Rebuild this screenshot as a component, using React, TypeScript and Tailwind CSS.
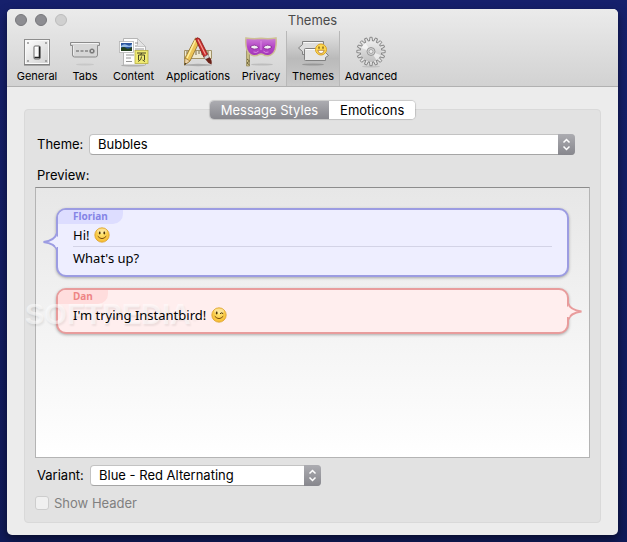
import { useState, type ReactNode } from 'react'

function GeneralIcon() {
  return (
    <svg width="32" height="32" viewBox="0 0 32 32" fill="none">
      <rect x="3.5" y="3.5" width="25" height="25" fill="url(#plate)" stroke="#8d8d8d" />
      <rect x="4.5" y="4.5" width="23" height="23" stroke="#fafafa" />
      <path d="M3 29h26" stroke="#747474" />
      {[7, 25].map((x) => [7, 25].map((y) => <circle key={`${x}${y}`} cx={x} cy={y} r="0.9" fill="#8a8a8a" />))}
      <rect x="13" y="10" width="6" height="13" rx="1" fill="#fff" stroke="#6b6b6b" />
      <path d="M14 12h3v6h-3z" fill="#f8f8f8" />
      <path d="M13.5 21.5h5v-11" stroke="#262626" strokeWidth="1.6" />
      <defs>
        <linearGradient id="plate" x1="0" y1="0" x2="1" y2="1">
          <stop stopColor="#fff" />
          <stop offset="1" stopColor="#cfcfcf" />
        </linearGradient>
      </defs>
    </svg>
  )
}

function TabsIcon() {
  return (
    <svg width="32" height="32" viewBox="0 0 32 32" fill="none">
      <ellipse cx="16" cy="28.5" rx="9" ry="1" fill="#000" opacity="0.08" />
      <path d="M1.5 6.5h29v3h-2v9.5q0 2-2 2h-21q-2 0-2-2V9.5h-2z" fill="#d6d6d6" stroke="#8b8b8b" />
      <path d="M2.5 7.5h27" stroke="#f3f3f3" />
      <path d="M4.5 10v9" stroke="#ececec" />
      <path d="M7 15h3M11.5 15h3M16 15h3" stroke="#999" strokeWidth="2" />
      <circle cx="23" cy="15" r="2.6" fill="#777" />
      <path d="M21.8 13.8l2.4 2.4m0-2.4l-2.4 2.4" stroke="#e0e0e0" strokeWidth="0.8" />
    </svg>
  )
}

function ContentIcon() {
  return (
    <svg width="32" height="32" viewBox="0 0 32 32" fill="none">
      <ellipse cx="15" cy="29.5" rx="12" ry="1" fill="#000" opacity="0.2" />
      <path d="M5.5 2.5h14l8 8v18.5h-22z" fill="#fdfdfd" stroke="#b5b5b5" />
      <path d="M19.5 2.5v8h8z" fill="#e3e3e3" stroke="#b8b8b8" strokeWidth="0.7" />
      <path d="M8 19h8M8 22h5M8 25.5h6M17 7h3M17 10h2M17 13h9" stroke="#888" strokeWidth="0.9" />
      <rect x="1.5" y="5.5" width="14" height="11" fill="#fff" stroke="#b4b4b4" strokeWidth="0.8" />
      <path d="M3 7h11v8H3z" fill="#2c559e" />
      <path d="M3 10q3-3 6-1t5-1v3H3z" fill="#96bbe6" />
      <path d="M3 12q3-2 5 0t6-1v4H3z" fill="#24411f" />
      <rect x="17" y="14.5" width="13" height="13" fill="#efea72" stroke="#b7ae41" strokeWidth="0.8" />
      <path d="M19 17h9M23.5 17l-.7 2M20.5 24v-5h6v5M23.5 20.5q.3 3.5-3.5 5M24.5 24l2.5 1.5" stroke="#38371c" strokeWidth="0.9" />
    </svg>
  )
}

function ApplicationsIcon() {
  return (
    <svg width="32" height="32" viewBox="0 0 32 32" fill="none">
      <ellipse cx="16" cy="29" rx="14" ry="1.2" fill="#000" opacity="0.2" />
      <path d="M2.5 14.5h27v8h-27z" fill="#eee8d0" stroke="#a3946a" />
      <path d="M5 15v3M8 15v4M11 15v3M14 15v4M17 15v3M20 15v4M23 15v3M26 15v4" stroke="#6e5f38" strokeWidth="0.9" />
      <path d="M13.5 2l4.5 2.5L8 25l-5.5 4L3 22z" fill="#ecc456" stroke="#8b6a25" strokeWidth="0.8" />
      <path d="M13.5 4L5 22" stroke="#fff0a0" strokeWidth="1.5" />
      <path d="M3 22l5 3-5.5 4z" fill="#edd2a7" stroke="#8b6a25" strokeWidth="0.6" />
      <path d="M2.5 29l.3-2.3 1.6 1z" fill="#222" />
      <path d="M13.5 3q1.5-2.5 4.5 0l8 16-4 2.5z" fill="#c92c2a" stroke="#841d1c" strokeWidth="0.8" />
      <path d="M16 3.5l7.5 15" stroke="#f59c93" strokeWidth="1.3" />
      <path d="M22 21l4-2.5 1.5 3-4 2z" fill="#d6d6d6" stroke="#777" strokeWidth="0.6" />
      <path d="M23.5 23.5l4-2.2q3 2.7 2 7.2-3.5-1-6-5z" fill="#6b2219" />
    </svg>
  )
}

function PrivacyIcon() {
  return (
    <svg width="32" height="32" viewBox="0 0 32 32" fill="none">
      <ellipse cx="17" cy="28.5" rx="11" ry="1" fill="#000" opacity="0.13" />
      <path d="M1.5 6h3v24h-3z" fill="#c9bd83" stroke="#8c8154" strokeWidth="0.7" />
      <path d="M2 23l2.5 2-2.5 2 2.5 2" stroke="#665b33" strokeWidth="0.9" />
      <path d="M1 2q7 1.300 15 .3 8 1 15-.3.8 6-.8 11.500-2 5.500-7 6.300-3.500.2-5.200-1.300-2-.8-4 0-1.700 1.500-5.200 1.300-5-.8-7-6.300Q.2 8 1 2z" fill="url(#mask)" stroke="#cdbf94" strokeWidth="1.5" />
      <path d="M5 11q4.500-4 9 .5-5 3.500-9-.5zM18 11.500q4.500-4.500 9-.5-4 4-9 .5z" fill="#f2ecf3" stroke="#7d2389" strokeWidth="0.8" />
      <path d="M16 5v9M8.500 16q3 1.300 5-.8M18.500 15.200q2 2.100 5 .8" stroke="#e08fe9" strokeWidth="0.9" />
      <defs>
        <linearGradient id="mask" x1="0" y1="0" x2="0" y2="1">
          <stop stopColor="#cd7fd6" />
          <stop offset="0.5" stopColor="#b545c8" />
          <stop offset="1" stopColor="#a237b7" />
        </linearGradient>
      </defs>
    </svg>
  )
}

function ThemesIcon() {
  return (
    <svg width="32" height="32" viewBox="0 0 32 32" fill="none">
      <ellipse cx="16" cy="28.5" rx="11" ry="1" fill="#000" opacity="0.2" />
      <path d="M5.5 5.5h21v13h-21v-3L1.5 12l4-3.5z" fill="#ddd" stroke="#808080" />
      <path d="M6.5 6.5h19" stroke="#f8f8f8" />
      <path d="M8.5 12.5h20v4l3 3-3 2v3h-20q-1 0-1-1V13.5q0-1 1-1z" fill="#e6e6e6" stroke="#808080" />
      <path d="M8.5 13.5h17" stroke="#fff" />
      <circle cx="24" cy="13.5" r="5.5" fill="#fdd94f" stroke="#d9a229" />
      <path d="M22 10.5v2.2M26 10.5v2.2" stroke="#5b3b0c" strokeWidth="1.1" />
      <path d="M20.8 14.3h6.4q-.5 3.2-3.2 3.2t-3.2-3.2z" fill="#fff" stroke="#a8691a" strokeWidth="0.7" />
    </svg>
  )
}

function AdvancedIcon() {
  const teeth = Array.from({ length: 16 }, (_, i) => i * 22.5)
  return (
    <svg width="32" height="32" viewBox="0 0 32 32" fill="none">
      <ellipse cx="16" cy="30.5" rx="9" ry="1" fill="#000" opacity="0.1" />
      <circle cx="16" cy="15.5" r="10.8" fill="#d0d0d0" stroke="#777" strokeWidth="0.8" />
      {teeth.map((angle) => (
        <path key={angle} d="M14.4 5.5l.5-4.2h2.2l.5 4.2" transform={`rotate(${angle} 16 15.5)`} fill="#e2e2e2" stroke="#777" strokeWidth="0.8" />
      ))}
      <circle cx="16" cy="15.5" r="10.4" fill="url(#gear)" />
      <path d="M16 15.5L6.5 12a10 10 0 0 1 4-5zM16 15.5l9.5 3.5a10 10 0 0 1-4 5z" fill="#fff" opacity="0.6" />
      <circle cx="16" cy="15.5" r="4" fill="#d2d2d2" stroke="#929292" strokeWidth="0.9" />
      <circle cx="16" cy="15.5" r="2" fill="#ececec" stroke="#999" strokeWidth="0.8" />
      <defs>
        <linearGradient id="gear" x1="0" y1="0" x2="0" y2="1">
          <stop stopColor="#ececec" />
          <stop offset="1" stopColor="#c0c0c0" />
        </linearGradient>
      </defs>
    </svg>
  )
}

function Smiley({ wink = false }: { wink?: boolean }) {
  return (
    <svg width="16" height="16" viewBox="0 0 16 16" fill="none">
      <circle cx="8" cy="8" r="7.2" fill="url(#face)" stroke="#dca12b" strokeWidth="0.8" />
      <ellipse cx="8" cy="4" rx="5" ry="2.5" fill="#fff" opacity="0.35" />
      <ellipse cx="5.7" cy="6" rx="0.9" ry="1.4" fill="#4a3208" />
      {wink ? (
        <path d="M9 6.7q1.7-1.8 3.2 0" stroke="#4a3208" />
      ) : (
        <ellipse cx="10.3" cy="6" rx="0.9" ry="1.4" fill="#4a3208" />
      )}
      <path d="M4 9.5q4 4.5 8 0" stroke="#7a4c0b" strokeLinecap="round" />
      <defs>
        <radialGradient id="face" cx="0.5" cy="0.4" r="0.6">
          <stop stopColor="#ffe877" />
          <stop offset="1" stopColor="#f6b92e" />
        </radialGradient>
      </defs>
    </svg>
  )
}

const tools = [
  { name: 'General', icon: <GeneralIcon />, width: 'w-[52px]' },
  { name: 'Tabs', icon: <TabsIcon />, width: 'w-[44px]' },
  { name: 'Content', icon: <ContentIcon />, width: 'w-[53px]' },
  { name: 'Applications', icon: <ApplicationsIcon />, width: 'w-[76px]' },
  { name: 'Privacy', icon: <PrivacyIcon />, width: 'w-[50px]' },
  { name: 'Themes', icon: <ThemesIcon />, width: 'w-[54px]' },
  { name: 'Advanced', icon: <AdvancedIcon />, width: 'w-[62px]' },
]

function Select({ id, options, className }: { id: string; options: string[]; className: string }) {
  return (
    <div className={`relative ${className}`}>
      <select id={id} className="block h-[21px] w-full appearance-none rounded-[4px] border border-[#c3c3c3] border-b-[#a5a5a5] bg-white pr-6 pl-2 text-[13px] leading-[19px] text-black">
        {options.map((option) => (
          <option key={option}>{option}</option>
        ))}
      </select>
      <span className="pointer-events-none absolute top-0 right-0 flex h-[21px] w-[17px] items-center justify-center rounded-r-[4px] bg-linear-to-b from-[#acacb1] to-[#87878d]">
        <svg width="9" height="13" viewBox="0 0 9 13" fill="none" stroke="#fff" strokeWidth="1.5">
          <path d="M1.5 4.5l3-3 3 3M1.5 8.5l3 3 3-3" />
        </svg>
      </span>
    </div>
  )
}

function Bubble({ name, red = false, children }: { name: string; red?: boolean; children: ReactNode }) {
  return (
    <div className={`relative rounded-[10px] border-2 pb-[6px] shadow-[0_1px_3px_rgba(0,0,0,0.3)] ${red ? 'border-[#e89c9c] bg-[#ffeeee]' : 'border-[#9c9ce2] bg-[#eeeeff]'}`}>
      <div className={`w-fit rounded-tl-[8px] rounded-br-[10px] px-[15px] pb-[2px] font-['Noto_Sans',sans-serif] text-[10px] leading-[12px] font-bold ${red ? 'bg-[#ffdddd] text-[#ee8585]' : 'bg-[#ddddff] text-[#8585e6]'}`}>
        {name}
      </div>
      {/* messages stay readable above the watermark */}
      <div className="relative z-10 mx-[15px] divide-y divide-[#d3d3e6] font-['Noto_Sans',sans-serif] text-[13px] leading-[22px] text-black">{children}</div>
      {red ? (
        <svg className="absolute top-[13px] -right-[16px]" width="18" height="18" viewBox="0 0 18 18">
          <path d="M3 0q2 7 13.5 8.5Q5 10 3 17" fill="#ffeeee" stroke="#e89c9c" strokeWidth="2" />
          <path d="M2 3v11h2.5V6z" fill="#ffeeee" />
        </svg>
      ) : (
        <svg className="absolute top-[23px] -left-[16px]" width="18" height="18" viewBox="0 0 18 18">
          <path d="M15 0q-2 7.500-13.500 9Q13 10.500 15 17" fill="#eeeeff" stroke="#9c9ce2" strokeWidth="2" />
          <path d="M16 3v11h-2.500V6z" fill="#eeeeff" />
        </svg>
      )}
    </div>
  )
}

export default function App() {
  const [tool, setTool] = useState('Themes')
  const [tab, setTab] = useState('Message Styles')

  return (
    <div className="flex min-h-screen bg-linear-to-b from-[#16206c] to-[#101a58] pt-[9px] pr-[9px] pb-[7px] pl-[7px] font-[Inter,sans-serif] text-[13px] text-black">
      <main className="flex flex-1 flex-col rounded-[5px] bg-[#ececec] shadow-[0_4px_10px_rgba(0,0,0,0.5)]">
        <header className="rounded-t-[5px] border-b border-[#b1b1b1] bg-linear-to-b from-[#ebebeb] to-[#d2d2d2]">
          <div className="grid h-[22px] grid-cols-[1fr_auto_1fr] items-center px-2">
            <div className="flex gap-2">
              <button aria-label="Close" className="size-3 rounded-full border border-[#77777b] bg-[#8d8d92]" />
              <button aria-label="Minimize" className="size-3 rounded-full border border-[#77777b] bg-[#8d8d92]" />
              <button aria-label="Zoom" disabled className="size-3 rounded-full border border-[#bcbcbc] bg-[#d0d0d0]" />
            </div>
            <h1 className="text-[13px] leading-[22px] text-[#4b4b4b]">Themes</h1>
          </div>
          <nav className="flex pl-1">
            {tools.map(({ name, icon, width }) => (
              <button
                key={name}
                onClick={() => setTool(name)}
                className={`flex h-[55px] shrink-0 flex-col items-center border-x pt-[5px] text-[11px] leading-[16px] ${width} ${tool === name ? 'border-[#b8b8b8] bg-linear-to-b from-[#e4e4e4] via-[#bababa] to-[#cbcbcb]' : 'border-transparent'}`}
              >
                {icon}
                {name}
              </button>
            ))}
          </nav>
        </header>

        <div className="flex flex-1 flex-col pt-[14px] pr-[17px] pb-[12px] pl-[17px]">
          <div className="z-10 -mb-[10px] flex h-[18px] self-center rounded-[4px] bg-white shadow-[0_0_1px_1px_rgba(0,0,0,0.15)]">
            {['Message Styles', 'Emoticons'].map((item) => (
              <button
                key={item}
                onClick={() => setTab(item)}
                className={`px-[11px] leading-[18px] first:rounded-l-[4px] last:rounded-r-[4px] ${tab === item ? 'bg-linear-to-b from-[#acacb1] to-[#87878d] text-white' : 'bg-white text-black'}`}
              >
                {item}
              </button>
            ))}
          </div>

          <section className="flex flex-1 flex-col rounded-[4px] border border-[#d9d9d9] bg-[#e2e2e2] px-[10px] pt-[24px] pb-[10px]">
            <div className="flex items-center pr-[15px] pl-[2px]">
              <label htmlFor="theme" className="w-[52px]">Theme:</label>
              <Select id="theme" options={['Bubbles']} className="flex-1" />
            </div>
            <h2 className="mt-[10px] mb-[2px] pl-[2px] leading-[20px]">Preview:</h2>
            <div className="flex min-h-[271px] flex-1 flex-col gap-[11px] border border-[#b4b4b4] border-t-[#8c8c8c] bg-linear-to-b from-[#e7e7e7] to-white px-[20px] pt-[20px]">
              <Bubble name="Florian">
                <p className="flex items-center gap-[5px]">Hi! <Smiley /></p>
                <p>What's up?</p>
              </Bubble>
              <div className="relative">
                <Bubble name="Dan" red>
                  <p className="flex items-center gap-[5px]">I'm trying Instantbird! <Smiley wink /></p>
                </Bubble>
                <span className="pointer-events-none absolute top-[8px] -left-[31px] font-['Liberation_Sans',sans-serif] text-[29px] leading-[36px] font-bold text-white/50 [text-shadow:1px_2px_2px_rgba(0,0,0,0.07)]">
                  SOFTPEDIA<sup className="text-[8px]">®</sup>
                </span>
              </div>
            </div>
            <div className="mt-[7px] flex items-center pl-[2px]">
              <label htmlFor="variant" className="w-[53px]">Variant:</label>
              <Select id="variant" options={['Blue - Red Alternating']} className="w-[231px]" />
            </div>
            <label className="mt-[8px] flex items-center gap-[5px] leading-[18px] text-[#808080]">
              <input type="checkbox" disabled className="size-[14px] appearance-none rounded-[3px] border border-[#cdcdcd] bg-[#f0f0f0]" />
              Show Header
            </label>
          </section>
        </div>
      </main>
    </div>
  )
}
